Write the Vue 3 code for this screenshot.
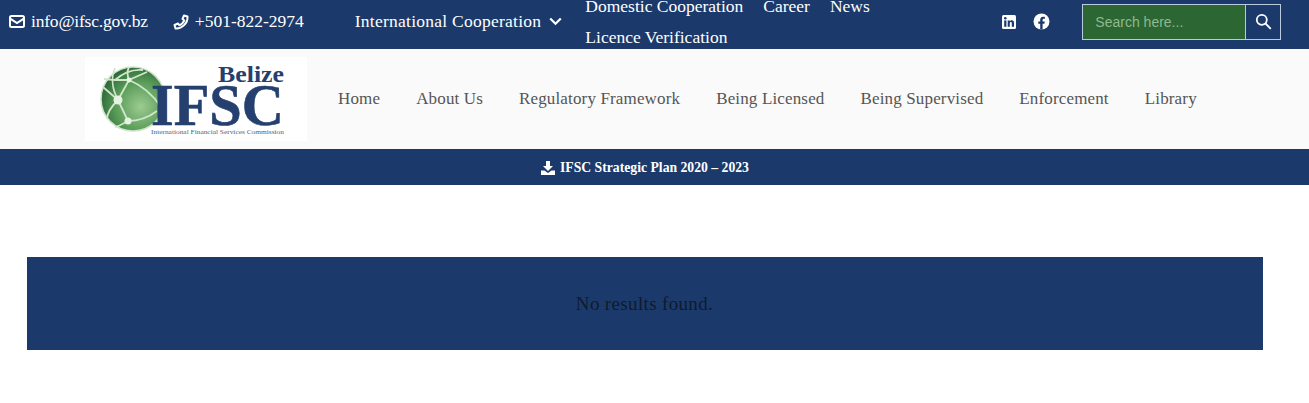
<script setup>
const mainNav = [
  "Home",
  "About Us",
  "Regulatory Framework",
  "Being Licensed",
  "Being Supervised",
  "Enforcement",
  "Library",
];
const topLinks = ["Domestic Cooperation", "Career", "News", "Licence Verification"];
</script>

<template>
  <div class="page">
    <header class="topbar">
      <a class="contact mail">
        <svg width="16" height="13" viewBox="0 0 16 13" fill="none" stroke="#fff" stroke-width="2">
          <rect x="1" y="1" width="14" height="11" rx="1.500" />
          <path d="M1.200 3.600 8 8l6.800-4.400" />
        </svg>
        info@ifsc.gov.bz
      </a>
      <a class="contact phone">
        <svg width="16" height="16" viewBox="0 0 16 16" fill="none" stroke="#fff" stroke-width="2" stroke-linejoin="round">
          <path d="M11 1.500 14.500 2.500C15 9 9 15 2.500 14.500L1.500 11 5 9.500 6.500 11.300C8.700 10.300 10.300 8.700 11.300 6.500L9.500 5Z" />
        </svg>
        +501-822-2974
      </a>
      <a class="dropdown">
        International Cooperation
        <svg width="13" height="9" viewBox="0 0 13 9" fill="none" stroke="#fff" stroke-width="2.200">
          <path d="M1.200 1.500 6.500 6.800 11.800 1.500" />
        </svg>
      </a>
      <nav class="toplinks">
        <a v-for="link in topLinks" :key="link">{{ link }}</a>
      </nav>
      <div class="social">
        <svg width="16" height="16" viewBox="0 0 16 16">
          <rect x="1" y="1" width="14" height="14" rx="1.500" fill="#fff" />
          <rect x="3.200" y="6.400" width="2.200" height="6.400" fill="#1b3a6b" />
          <circle cx="4.300" cy="4.300" r="1.300" fill="#1b3a6b" />
          <path d="M6.700 6.400h2.100v.9c.4-.7 1.200-1.100 2-1.100 1.700 0 2.200 1.100 2.200 2.700v3.900h-2.200V9.400c0-.8-.2-1.400-.9-1.400-.8 0-1.100.6-1.100 1.400v3.400H6.700Z" fill="#1b3a6b" />
        </svg>
        <svg width="17" height="17" viewBox="0 0 17 17">
          <circle cx="8.500" cy="8.500" r="8" fill="#fff" />
          <path d="M7.200 16.500v-5.700H5.300V8.500h1.900V6.800c0-2 1.200-3.100 3-3.100.9 0 1.700.2 1.700.2v1.900h-1c-.9 0-1.300.6-1.300 1.200v1.500h2.200l-.4 2.300H9.600v5.700Z" fill="#1b3a6b" />
        </svg>
      </div>
      <div class="search">
        <span class="search-input">Search here...</span>
        <span class="search-btn">
          <svg width="17" height="17" viewBox="0 0 17 17" fill="none" stroke="#fff" stroke-width="1.800">
            <circle cx="6.800" cy="6.800" r="5" />
            <path d="m10.500 10.500 5.300 5.300" />
          </svg>
        </span>
      </div>
    </header>

    <div class="mainbar">
      <div class="logo">
        <svg width="222" height="84" viewBox="0 0 222 84">
          <defs>
            <radialGradient id="globe" cx="0.620" cy="0.620" r="0.700">
              <stop offset="0" stop-color="#9ccb92" />
              <stop offset="0.550" stop-color="#5a9c58" />
              <stop offset="1" stop-color="#245f33" />
            </radialGradient>
          </defs>
          <circle cx="48" cy="42" r="32" fill="url(#globe)" stroke="#cfe3ca" stroke-width="1.500" />
          <g fill="none" stroke="#cfe6ca" stroke-width="1.800">
            <path d="M33 43C27 32 26 20 30 11" />
            <path d="M33 43 44 23 62 15" />
            <path d="M33 43 43 64" />
            <path d="M19 22 30 23 44 23C56 28 68 38 76 50" />
            <path d="M30 23C38 16 48 12 58 13" />
            <path d="M44 23C42 18 42 14 44 10" />
            <path d="M33 43 18 30" />
            <path d="M33 43C26 50 22 56 22 62" />
            <path d="M43 64C36 68 32 70 30 70" />
            <path d="M43 64C54 64 64 60 72 54" />
          </g>
          <circle cx="33" cy="43" r="4.500" fill="#e6f2e2" />
          <circle cx="44" cy="23" r="2.500" fill="#e6f2e2" />
          <circle cx="43" cy="64" r="3.500" fill="#e6f2e2" />
          <text class="logo-belize" x="199" y="25" text-anchor="end" textLength="66" lengthAdjust="spacingAndGlyphs">Belize</text>
          <text class="logo-ifsc" x="199" y="68" text-anchor="end" textLength="133" lengthAdjust="spacingAndGlyphs">IFSC</text>
          <text class="logo-sub" x="199" y="77" text-anchor="end" textLength="133" lengthAdjust="spacingAndGlyphs">International Financial Services Commission</text>
        </svg>
      </div>
      <nav class="mainnav">
        <a v-for="item in mainNav" :key="item">{{ item }}</a>
      </nav>
    </div>

    <div class="strip">
      <svg width="14" height="14" viewBox="0 0 14 14" fill="#fff">
        <path d="M5 0h4v5h3L7 10 2 5h3Z" />
        <path d="M0 9.500h3.500L7 12l3.500-2.500H14V14H0Z" />
      </svg>
      <span>IFSC Strategic Plan 2020 – 2023</span>
    </div>

    <main class="content">
      <div class="panel">No results found.</div>
    </main>
  </div>
</template>

<style scoped>
.page {
  width: 1309px;
  height: 403px;
  overflow: hidden;
  background: #fff;
  font-family: "Liberation Serif", serif;
}

.topbar {
  height: 49px;
  box-sizing: border-box;
  padding-bottom: 6px;
  background: #1b3a6b;
  color: #fff;
  display: flex;
  align-items: center;
  font-size: 17.500px;
  overflow: hidden;
}

.contact {
  display: flex;
  align-items: center;
  gap: 6px;
  white-space: nowrap;
}

.mail {
  margin-left: 9px;
  letter-spacing: -0.2px;
}

.phone {
  margin-left: 25px;
}

.dropdown {
  display: flex;
  align-items: center;
  gap: 8px;
  margin-left: 51px;
  letter-spacing: 0.25px;
  white-space: nowrap;
}

.toplinks {
  width: 330px;
  margin-left: 23px;
  display: flex;
  flex-wrap: wrap;
  align-content: flex-start;
  column-gap: 20px;
  line-height: 31px;
  flex-shrink: 0;
  height: 62px;
  white-space: nowrap;
}

.social {
  display: flex;
  align-items: center;
  gap: 16px;
  margin-left: 86px;
}

.search {
  display: flex;
  margin-left: 32px;
  height: 36px;
  width: 199px;
  border: 1px solid #b9cbdc;
  box-sizing: border-box;
  font-family: "Liberation Sans", sans-serif;
  font-size: 14px;
}

.search-input {
  flex: 1;
  background: #2b6633;
  color: #8fb98f;
  padding-left: 12px;
  display: flex;
  align-items: center;
}

.search-btn {
  width: 34px;
  border-left: 1px solid #b9cbdc;
  display: flex;
  align-items: center;
  justify-content: center;
}

.mainbar {
  height: 100px;
  background: #fafafa;
  display: flex;
  align-items: center;
}

.logo {
  margin-left: 85px;
  width: 222px;
  height: 84px;
  background: #fff;
}

.logo-belize {
  font: 700 23px "Liberation Serif", serif;
  fill: #25406f;
}

.logo-ifsc {
  font: 700 60px "Liberation Serif", serif;
  fill: #25406f;
  stroke: #25406f;
  stroke-width: 0.6px;
}

.logo-sub {
  font: 400 7px "Liberation Serif", serif;
  fill: #4d5f7e;
}

.mainnav {
  display: flex;
  gap: 36px;
  margin-left: 31px;
  font-size: 17px;
  letter-spacing: 0.15px;
  color: #555;
  white-space: nowrap;
}

.strip {
  height: 36px;
  background: #1b3a6b;
  color: #fff;
  display: flex;
  align-items: center;
  justify-content: center;
  gap: 5px;
  font-size: 13.700px;
  font-weight: 700;
  padding: 1px 19px 0 0;
  box-sizing: border-box;
}

.content {
  padding: 72px 46px 0 27px;
}

.panel {
  height: 93px;
  background: #1b3a6b;
  color: #0f1a2c;
  font-size: 19px;
  letter-spacing: 0.35px;
  display: flex;
  align-items: center;
  justify-content: center;
  box-sizing: border-box;
  padding-right: 1px;
}
</style>
